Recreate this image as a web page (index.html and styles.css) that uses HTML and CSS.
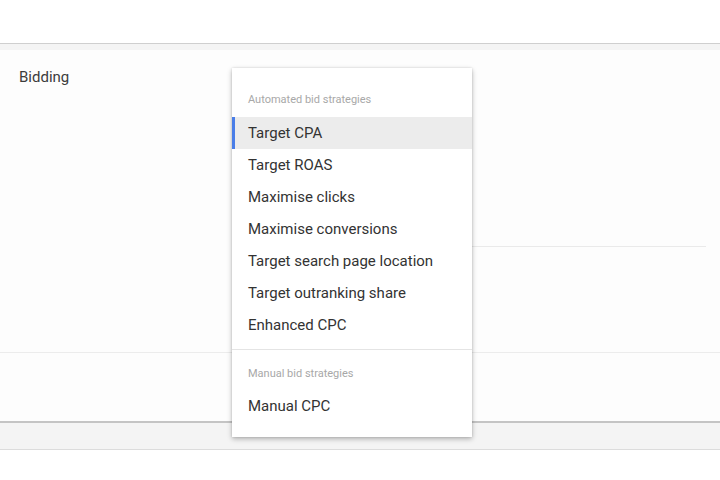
FILE: index.html
```html
<!DOCTYPE html>
<html>
<head>
<meta charset="utf-8">
<link rel="stylesheet" href="styles.css">
</head>
<body>
<div class="top"></div>
<div class="panel">
  <div class="card">
    <div class="section">
      <div class="label">Bidding</div>
      <div class="content">
        <div class="field"></div>
      </div>
    </div>
    <div class="section2"></div>
  </div>
  <div class="footer"></div>
</div>
<div class="menu">
  <div class="group-title first">Automated bid strategies</div>
  <div class="item active">Target CPA</div>
  <div class="item">Target ROAS</div>
  <div class="item">Maximise clicks</div>
  <div class="item">Maximise conversions</div>
  <div class="item">Target search page location</div>
  <div class="item">Target outranking share</div>
  <div class="item">Enhanced CPC</div>
  <div class="divider"></div>
  <div class="group-title">Manual bid strategies</div>
  <div class="item">Manual CPC</div>
</div>
</body>
</html>
```
FILE: styles.css
```css
html, body {
  margin: 0;
  padding: 0;
  background: #fff;
  font-family: Roboto, "Liberation Sans", sans-serif;
}
.top {
  height: 43px;
}
.panel {
  border-top: 1px solid #cfcfcf;
  background: #f4f4f4;
  padding-top: 6px;
  border-bottom: 1px solid #dcdcdc;
}
.card {
  background: #fdfdfd;
  border-bottom: 2px solid #c4c4c4;
}
.section {
  height: 302px;
  border-bottom: 1px solid #ececec;
  display: flex;
}
.label {
  width: 232px;
  box-sizing: border-box;
  padding: 18px 0 0 19px;
  font-size: 15px;
  color: #3c3c3c;
}
.content {
  flex: 1;
  padding-right: 14px;
}
.field {
  height: 196px;
  border-bottom: 1px solid #eaeaea;
}
.section2 {
  height: 68px;
}
.footer {
  height: 26px;
}
.menu {
  position: absolute;
  left: 232px;
  top: 68px;
  width: 240px;
  background: #fff;
  box-shadow: 0 2px 5px rgba(0,0,0,0.28), 0 0 2px rgba(0,0,0,0.12);
  padding: 16px 0 15px;
}
.group-title {
  height: 32px;
  line-height: 32px;
  padding-left: 16px;
  font-size: 11px;
  color: #a8a8a8;
}
.item {
  height: 32px;
  line-height: 32px;
  padding-left: 16px;
  font-size: 15px;
  color: #333;
}
.item.active {
  background: #ececec;
  box-shadow: inset 3px 0 0 #4a7ee8;
}
.first {
  margin-bottom: 1px;
}
.divider {
  margin-top: 8px;
  border-top: 1px solid #e4e4e4;
  margin-bottom: 8px;
}
```
